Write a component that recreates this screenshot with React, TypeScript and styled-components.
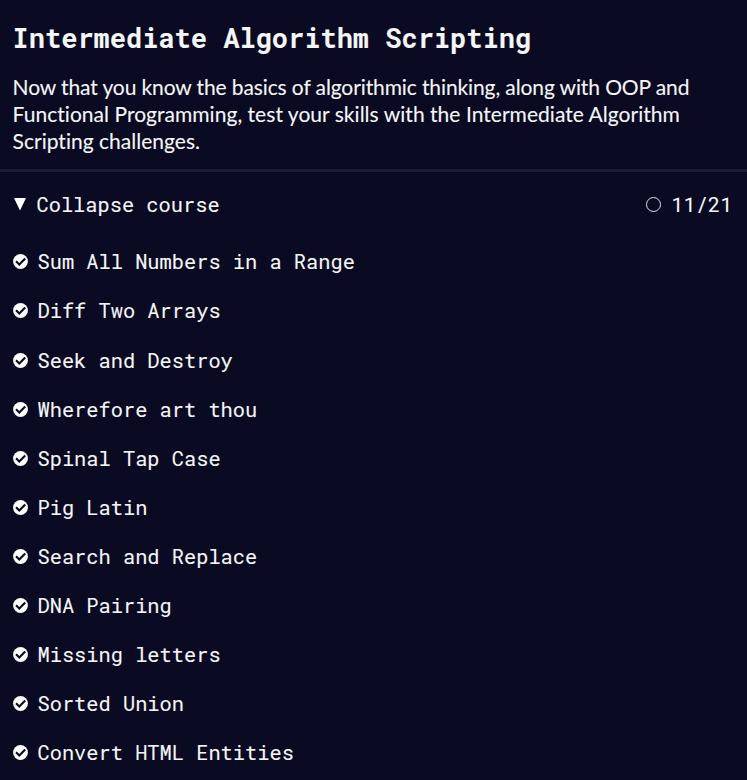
import React from "react";
import styled, { createGlobalStyle } from "styled-components";

const GlobalStyle = createGlobalStyle`
  * { box-sizing: border-box; }
  body { margin: 0; background: #0a0a23; }
`;

const mono = `"Roboto Mono", "Liberation Mono", monospace`;

const Page = styled.main`
  height: 780px;
  overflow: hidden;
  background: #0a0a23;
  color: #f5f6f7;
  font-family: Lato, sans-serif;
  -webkit-text-stroke: 0.1px currentColor;
`;

const Header = styled.header`
  height: 172px;
  padding: 20px 12.6px 0;
  border-bottom: 3px solid #1b1b32;
`;

const Title = styled.h1`
  margin: 0;
  font: 700 27px/36px ${mono};
  white-space: nowrap;
`;

const Intro = styled.p`
  margin: 17px 0 0;
  font-size: 21px;
  line-height: 27px;
  font-variant-ligatures: none;
`;

const Line = styled.span<{ $tracking?: number }>`
  display: block;
  white-space: nowrap;
  letter-spacing: ${({ $tracking = 0 }) => $tracking}px;
`;

const Toggle = styled.div`
  display: flex;
  align-items: center;
  height: 65.37px;
  padding: 0 14.6px 0 14px;
  font: 400 20.35px/27px ${mono};
`;

const ToggleLabel = styled.span`
  flex: 1;
  margin-left: 10.5px;
`;

const Count = styled.span`
  margin-left: 9.6px;
`;

const List = styled.ul`
  list-style: none;
  margin: 0;
  padding: 0 13px;
`;

const Row = styled.li`
  display: flex;
  align-items: center;
  gap: 9.5px;
  height: 49.07px;
  font: 400 20.35px/27px ${mono};
  white-space: nowrap;
`;

const Icon = styled.svg`
  display: block;
  flex: none;
`;

const challenges = [
  "Sum All Numbers in a Range",
  "Diff Two Arrays",
  "Seek and Destroy",
  "Wherefore art thou",
  "Spinal Tap Case",
  "Pig Latin",
  "Search and Replace",
  "DNA Pairing",
  "Missing letters",
  "Sorted Union",
  "Convert HTML Entities",
];

const CheckIcon = () => (
  <Icon width="15" height="15" viewBox="0 0 15 15">
    <circle cx="7.5" cy="7.5" r="7.4" fill="#fff" />
    <path d="M3 7.3 6.3 10.5 12.2 4.6" fill="none" stroke="#0a0a23" strokeWidth="2.1" />
  </Icon>
);

export default function App() {
  return (
    <Page>
      <GlobalStyle />
      <Header>
        <Title>Intermediate Algorithm Scripting</Title>
        <Intro>
          <Line $tracking={-0.11}>Now that you know the basics of algorithmic thinking, along with OOP and</Line>
          <Line $tracking={0.035}>Functional Programming, test your skills with the Intermediate Algorithm</Line>
          <Line $tracking={0.02}>Scripting challenges.</Line>
        </Intro>
      </Header>
      <Toggle>
        <Icon width="12" height="13" viewBox="0 0 12 13">
          <path d="M0 0H12L6 12.5Z" fill="#fff" />
        </Icon>
        <ToggleLabel>Collapse course</ToggleLabel>
        <Icon width="16" height="16" viewBox="0 0 16 16">
          <circle cx="7.5" cy="7.5" r="7" fill="none" stroke="#f5f6f7" strokeWidth="0.9" />
        </Icon>
        <Count>11/21</Count>
      </Toggle>
      <List>
        {challenges.map((name) => (
          <Row key={name}>
            <CheckIcon />
            <span>{name}</span>
          </Row>
        ))}
      </List>
    </Page>
  );
}
